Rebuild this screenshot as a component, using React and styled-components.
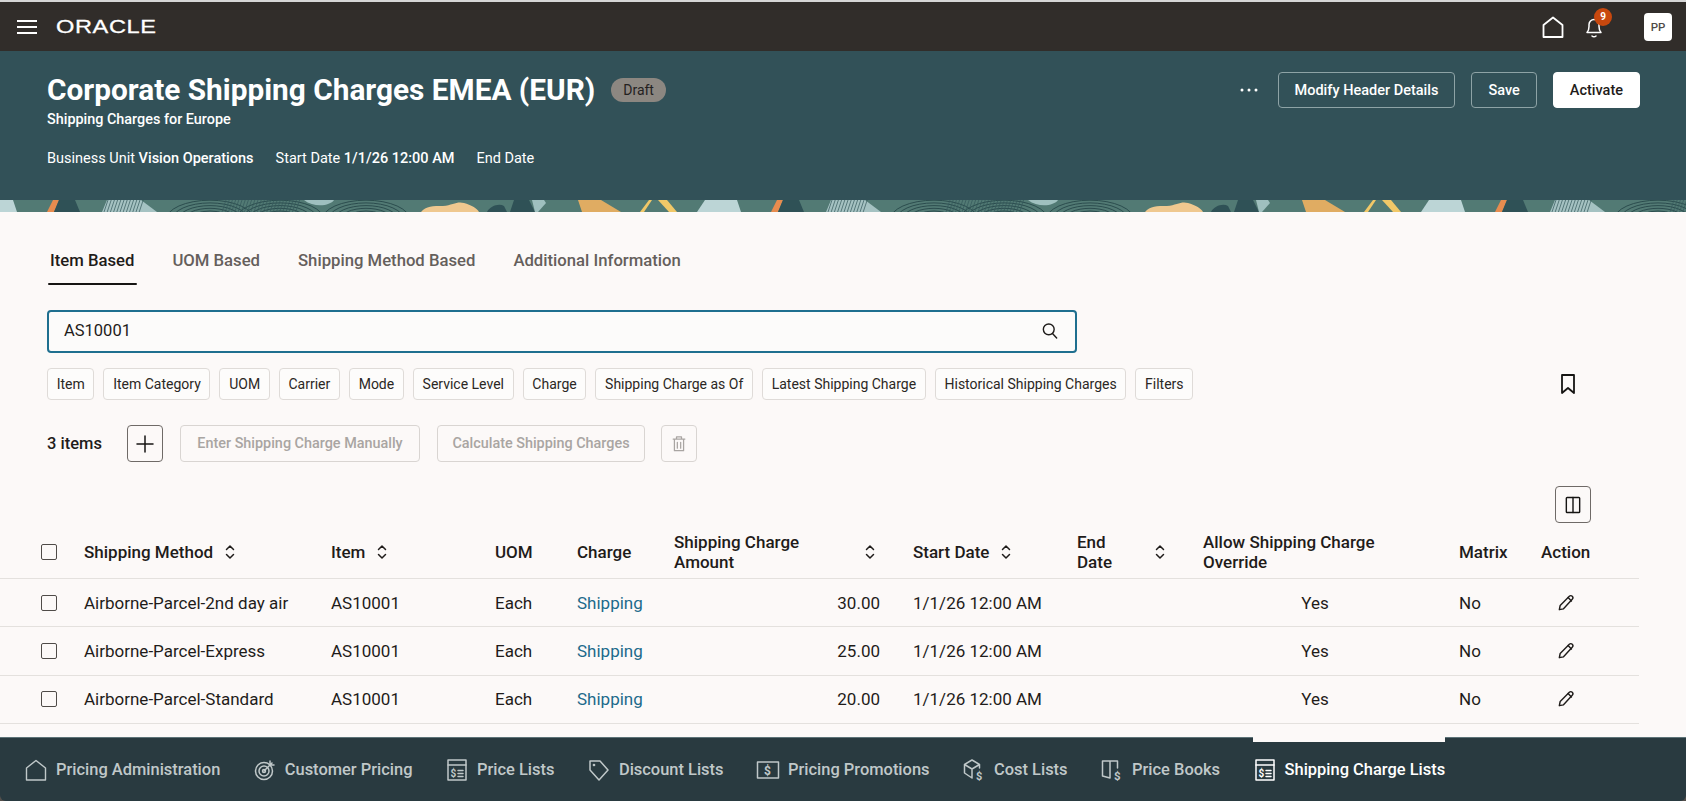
import React from "react";
import styled, { createGlobalStyle } from "styled-components";

const Global = createGlobalStyle`
  html, body { margin: 0; padding: 0; background: #fcf9f8; }
  body { font-family: Roboto, "Liberation Sans", sans-serif; color: #1f1c1a; overflow: hidden; }
  * { box-sizing: border-box; }
`;

const Page = styled.div`
  width: 1686px; height: 801px; display: flex; flex-direction: column;
  border-top: 2px solid #d6d6d6; background: #55504c; overflow: hidden;
`;
const TopBar = styled.header`
  height: 49px; flex: none; background: #312d2a; display: flex; align-items: center;
  padding: 0 14px 0 17px; color: #fff;
`;
const Logo = styled.span`
  margin-left: 19px; font: 400 19px "Liberation Sans", sans-serif; letter-spacing: 0.5px;
  transform: scaleX(1.24); transform-origin: left; -webkit-text-stroke: 0.3px #fff;
`;
const Spacer = styled.div`flex: 1;`;
const BellWrap = styled.div`position: relative; width: 24px; height: 24px; margin-left: 17px; margin-right: 38px;`;
const Badge = styled.span`
  position: absolute; right: -6px; top: -7px; width: 18px; height: 18px; border-radius: 50%;
  background: #c8480e; color: #fff; font: 700 10px/18px Roboto, sans-serif; text-align: center;
`;
const Avatar = styled.div`
  width: 28px; height: 28px; border-radius: 4px; background: #fff; color: #4f4b48;
  font: 500 11.5px/28px Roboto, sans-serif; text-align: center;
`;
const Hero = styled.section`
  height: 149px; flex: none; background: #325158; padding: 20px 46px 0 47px; color: #fff;
  display: flex; justify-content: space-between; align-items: flex-start;
`;
const TitleLine = styled.div`display: flex; align-items: center; gap: 16px;`;
const Title = styled.h1`margin: 0; font: 700 29.8px/38px Roboto, sans-serif;`;
const Pill = styled.span`
  background: #8c8781; color: #24211f; border-radius: 12px; font: 400 14px/24px Roboto, sans-serif; padding: 0 12px;
`;
const Sub = styled.div`font: 500 14.4px/18px Roboto, sans-serif; margin-top: 2px;`;
const Meta = styled.div`display: flex; gap: 22px; margin-top: 20px; font: 400 14.5px/20px Roboto, sans-serif;`;
const Strong = styled.b`font-weight: 500;`;
const HeroActions = styled.div`display: flex; align-items: center; height: 36px; gap: 16px; color: #fff; margin-top: 1px;`;
const HeroBtn = styled.button`
  height: 36px; border-radius: 4px; padding: 0 16px; font: 500 14.5px Roboto, sans-serif; cursor: pointer;
  background: ${p => (p.$solid ? "#fff" : "transparent")}; color: ${p => (p.$solid ? "#1f1c1a" : "#fff")};
  border: 1px solid ${p => (p.$solid ? "#fff" : "#8ea3a6")};
`;
const Dots = styled.svg`display: block; margin-right: 4px;`;
const Strip = styled.svg`display: block; width: 1686px; height: 12px; flex: none;`;
const Main = styled.main`flex: 1; min-height: 0; background: #fcf9f8;`;
const Tabs = styled.nav`display: flex; gap: 38px; padding: 39px 0 0 50px; height: 71px;`;
const TabItem = styled.a`
  position: relative; font: 500 16.7px/20px Roboto, sans-serif; color: ${p => (p.$on ? "#1f1c1a" : "#655f5c")};
  ${p => p.$on && `&::after{content:"";position:absolute;left:-2px;right:-3px;top:32px;height:2px;background:#161513;border-radius:2px;}`}
`;
const Search = styled.div`
  margin: 27px 0 0 47px; width: 1030px; height: 43px; border: 2px solid #1f6f8f; border-radius: 4px;
  display: flex; align-items: center; justify-content: space-between; padding: 0 15px 2px; font: 400 16.5px Roboto, sans-serif; background: #fcfbfa;
`;
const Chips = styled.div`display: flex; align-items: center; gap: 9px; margin: 15px 0 0 47px; height: 32px; width: 1533px;`;
const Chip = styled.span`
  height: 32px; padding: 0 8.7px 1px; display: flex; align-items: center; border: 1px solid #dfdbd8; border-radius: 4px;
  font: 400 14px Roboto, sans-serif; color: #2b2724; background: #fdfcfb; white-space: nowrap;
`;
const BookmarkBtn = styled.span`margin-left: auto; display: flex; color: #161513;`;
const ToolRow = styled.div`display: flex; align-items: center; margin: 25px 0 0 47px; height: 37px;`;
const Count = styled.span`font: 500 16.5px Roboto, sans-serif; width: 80px;`;
const IconBtn = styled.span`
  width: 36px; height: 37px; border-radius: 4px; display: flex; align-items: center; justify-content: center;
  border: 1px solid ${p => (p.$dim ? "#d9d5d2" : "#6f6a67")}; color: ${p => (p.$dim ? "#a9a5a2" : "#161513")};
  margin-left: ${p => p.$ml || 0}px;
`;
const GhostBtn = styled.span`
  height: 37px; width: ${p => p.$w}px; border: 1px solid #d9d5d2; border-radius: 4px; display: flex; align-items: center; justify-content: center;
  font: 500 14.4px Roboto, sans-serif; color: #a9a5a2; margin-left: ${p => p.$ml}px;
`;
const ColsRow = styled.div`display: flex; justify-content: flex-end; width: 1591px; margin-top: 24px;`;
const Table = styled.div`width: 1639px; margin-top: 4px;`;
const Row = styled.div`
  display: grid; grid-template-columns: 84px 247px 164px 82px 97px 239px 164px 126px 256px 82px 98px;
  align-items: center; height: ${p => (p.$head ? 52 : 48.3)}px; border-bottom: 1px solid #e4e1de;
  padding-bottom: ${p => (p.$head ? 2 : 0)}px;
  font: ${p => (p.$head ? 500 : 400)} 17px/20px Roboto, sans-serif;
`;
const Cell = styled.div`
  display: flex; align-items: center;
  justify-content: ${p => p.$j || "flex-start"};
  padding-right: ${p => p.$pr || 0}px; padding-left: ${p => p.$pl || 0}px;
  ${p => p.$link && `color:#1d6a8b;`}
  gap: ${p => p.$gap || 0}px;
`;
const Box = styled.span`width: 16px; height: 16px; border: 1.5px solid #4f4b48; border-radius: 2px; margin-left: 41px; display: block;`;
const Dock = styled.footer`
  flex: none; height: 64px; background: #293a40; display: flex; align-items: stretch; gap: 32.5px;
  padding-left: 24px; border-bottom-left-radius: 6px; border-bottom-right-radius: 6px; border-top: 1px solid #5d7378;
`;
const DockItem = styled.div`
  position: relative; display: flex; align-items: center; gap: 8px;
  color: ${p => (p.$on ? "#fff" : "#c0c8c9")}; font: 500 16.45px Roboto, sans-serif; white-space: nowrap;
  ${p => p.$on && `&::before{content:"";position:absolute;left:0;right:0;top:-1px;height:5px;background:#fcf9f8;}`}
`;

const S = ({ size = 24, children, sw = 1.5 }) => (
  <svg width={size} height={size} viewBox="0 0 24 24" fill="none" stroke="currentColor" strokeWidth={sw} strokeLinecap="round" strokeLinejoin="round">{children}</svg>
);
const Menu = () => <svg width="20" height="14" viewBox="0 0 20 14" stroke="#fff" strokeWidth="2"><path d="M0 1h20M0 7h20M0 13h20" /></svg>;
const Home = ({ size = 24, sw = 1.8 }) => <S size={size} sw={sw}><path d="M2.500 22V10L12 2.500 21.500 10v12z" /></S>;
const Bell = () => <S><path d="M5 17.500c1.400-1.600 2-3.200 2-6V9.500a5 5 0 0 1 10 0v2c0 2.800.6 4.400 2 6z" /><path d="M10 21c1 .9 3 .9 4 0" /></S>;
const Magnifier = () => <S size={20} sw={1.7}><circle cx="10.500" cy="10" r="6.500" /><path d="M15 15l5 5.500" /></S>;
const Bookmark = () => <S sw={1.8}><path d="M6 3h12v18l-6-5-6 5z" /></S>;
const Plus = () => <S sw={1.5}><path d="M12 4v16M4 12h16" /></S>;
const Trash = () => <S size={20}><path d="M5 6h14M9 6V3.500h6V6M6.500 6v14h11V6M10 10v7M14 10v7" /></S>;
const Columns = () => <S size={20} sw={1.7}><rect x="4" y="3" width="16" height="18" rx="1" /><path d="M12 3v18" /></S>;
const Sort = () => <svg width="12" height="16" viewBox="0 0 12 16" fill="none" stroke="currentColor" strokeWidth="1.500" strokeLinecap="round" strokeLinejoin="round"><path d="M2.500 5.500L6 2l3.500 3.500M2.500 10.500L6 14l3.500-3.500" /></svg>;
const Pencil = () => <S size={20} sw={1.7}><path d="M4 20l1-5L16 4c1-1 2.500-1 3.500 0s1 2.500 0 3.500L9 19z" /><path d="M14.500 5.500l4 4" /></S>;
const Target = () => <S><circle cx="11" cy="13" r="8.500" /><circle cx="11" cy="13" r="5" /><circle cx="11" cy="13" r="1.500" /><path d="M11 13l8-8M17 3v4h4" /></S>;
const Ledger = () => <S><rect x="3" y="2" width="18" height="20" /><path d="M3 7h18" /><text x="5.500" y="18.500" fontSize="10" fontWeight="700" fill="currentColor" stroke="none">$</text><path d="M13 12.500h5M13 15.500h5M13 18.500h5" /></S>;
const Tag = () => <S><path d="M3 3h10l8 9-9 10-9-10z" /><circle cx="7" cy="7" r=".6" /></S>;
const Promo = () => <S><rect x="1.500" y="4" width="21" height="16" /><text x="8" y="17" fontSize="12" fontWeight="700" fill="currentColor" stroke="none">$</text></S>;
const Cube = () => <S><path d="M10 2l7.500 4.500V10M10 2L2.500 6.500v8.500l7.500 5M2.500 6.500L10 11l7.500-4.500M10 11v9" /><text x="14" y="21.500" fontSize="11" fontWeight="700" fill="currentColor" stroke="none">$</text></S>;
const BookD = () => <S><path d="M2.500 3H10v17l-7.500-2zM10 3h7.500v7" /><text x="14" y="21.500" fontSize="11.500" fontWeight="700" fill="currentColor" stroke="none">$</text></S>;

const Rings = ({ cx }) => (
  <g fill="none" stroke="#27474a" strokeWidth=".9">
    {[8, 14, 20, 26, 32, 38, 44].map(r => <ellipse key={r} cx={cx} cy="20" rx={r} ry={r * 0.45} />)}
  </g>
);
const Hatch = ({ x, n }) => (
  <g stroke="#34585a" strokeWidth=".7">
    {Array.from({ length: n }, (_, i) => <path key={i} d={`M${x + i * 3.200 + 4} 0L${x + i * 3.200} 12`} />)}
  </g>
);
const Tile = ({ x }) => (
  <g transform={`translate(${x} 0)`}>
    <path d="M53 0h6l-5 12h-7z" fill="#e78c4f" />
    <path d="M59 0h16l5 12H54z" fill="#2f5156" />
    <path d="M107 0h34l16 12H102z" fill="#a5c2c2" />
    <Hatch x={104} n={12} />
    <Rings cx={210} />
    <Rings cx={280} />
    <Rings cx={366} />
    <Hatch x={222} n={24} />
    <path d="M304 0h30c-4 6-20 8-30 0z" fill="#9fc0bf" />
    <path d="M421 12c5-6 12-6 22-6 10-1 14-5 21-3 7 2 13 5 15 9z" fill="#efc88f" />
    <path d="M487 12c3-6 12-9 17-6l3 6z" fill="#2f5156" />
    <path d="M514 0h15l6 12h-25z" fill="#2f5156" />
    <path d="M532 0h12l2 3-8 9h-3z" fill="#9fc0bf" />
    <path d="M578 0h23l20 12h-39z" fill="#e0ac62" />
    <path d="M649 0h3l-8 12h-4z" fill="#f1c868" />
    <path d="M658 0h9l10 12h-8z" fill="#f1c868" />
    <path d="M705 0h32l4 12h-44z" fill="#bcd5d6" />
  </g>
);
const Pattern = () => (
  <Strip viewBox="0 0 1686 12" preserveAspectRatio="none">
    <rect width="1686" height="12" fill="#527a74" />
    {[-724, 0, 724, 1448].map(x => <Tile key={x} x={x} />)}
  </Strip>
);

const rows = [
  ["Airborne-Parcel-2nd day air", "30.00"],
  ["Airborne-Parcel-Express", "25.00"],
  ["Airborne-Parcel-Standard", "20.00"],
];
const chips = ["Item", "Item Category", "UOM", "Carrier", "Mode", "Service Level", "Charge", "Shipping Charge as Of", "Latest Shipping Charge", "Historical Shipping Charges", "Filters"];
const dock = [
  ["Pricing Administration", <Home key="h" sw={1.4} />],
  ["Customer Pricing", <Target key="t" />],
  ["Price Lists", <Ledger key="l" />],
  ["Discount Lists", <Tag key="g" />],
  ["Pricing Promotions", <Promo key="p" />],
  ["Cost Lists", <Cube key="c" />],
  ["Price Books", <BookD key="b" />],
  ["Shipping Charge Lists", <Ledger key="s" />, true],
];

export default function App() {
  return (
    <Page>
      <Global />
      <TopBar>
        <Menu />
        <Logo>ORACLE</Logo>
        <Spacer />
        <Home />
        <BellWrap><Bell /><Badge>9</Badge></BellWrap>
        <Avatar>PP</Avatar>
      </TopBar>
      <Hero>
        <div>
          <TitleLine><Title>Corporate Shipping Charges EMEA (EUR)</Title><Pill>Draft</Pill></TitleLine>
          <Sub>Shipping Charges for Europe</Sub>
          <Meta>
            <span>Business Unit <Strong>Vision Operations</Strong></span>
            <span>Start Date <Strong>1/1/26 12:00 AM</Strong></span>
            <span>End Date</span>
          </Meta>
        </div>
        <HeroActions>
          <Dots width="18" height="4" viewBox="0 0 18 4" fill="#fff"><circle cx="2" cy="2" r="1.500" /><circle cx="9" cy="2" r="1.500" /><circle cx="16" cy="2" r="1.500" /></Dots>
          <HeroBtn>Modify Header Details</HeroBtn>
          <HeroBtn>Save</HeroBtn>
          <HeroBtn $solid>Activate</HeroBtn>
        </HeroActions>
      </Hero>
      <Pattern />
      <Main>
        <Tabs>
          <TabItem $on>Item Based</TabItem>
          <TabItem>UOM Based</TabItem>
          <TabItem>Shipping Method Based</TabItem>
          <TabItem>Additional Information</TabItem>
        </Tabs>
        <Search>AS10001<Magnifier /></Search>
        <Chips>
          {chips.map(c => <Chip key={c}>{c}</Chip>)}
          <BookmarkBtn><Bookmark /></BookmarkBtn>
        </Chips>
        <ToolRow>
          <Count>3 items</Count>
          <IconBtn><Plus /></IconBtn>
          <GhostBtn $w={240} $ml={17}>Enter Shipping Charge Manually</GhostBtn>
          <GhostBtn $w={208} $ml={17}>Calculate Shipping Charges</GhostBtn>
          <IconBtn $dim $ml={16}><Trash /></IconBtn>
        </ToolRow>
        <ColsRow><IconBtn><Columns /></IconBtn></ColsRow>
        <Table>
          <Row $head>
            <Cell><Box /></Cell>
            <Cell $gap={11}>Shipping Method <Sort /></Cell>
            <Cell $gap={11}>Item <Sort /></Cell>
            <Cell>UOM</Cell>
            <Cell>Charge</Cell>
            <Cell $j="space-between" $pr={37}><span>Shipping Charge<br />Amount</span><Sort /></Cell>
            <Cell $gap={11}>Start Date <Sort /></Cell>
            <Cell $j="space-between" $pr={37}><span>End<br />Date</span><Sort /></Cell>
            <Cell><span>Allow Shipping Charge<br />Override</span></Cell>
            <Cell>Matrix</Cell>
            <Cell>Action</Cell>
          </Row>
          {rows.map(([m, a]) => (
            <Row key={m}>
              <Cell><Box /></Cell>
              <Cell>{m}</Cell>
              <Cell>AS10001</Cell>
              <Cell>Each</Cell>
              <Cell $link>Shipping</Cell>
              <Cell $j="flex-end" $pr={33}>{a}</Cell>
              <Cell>1/1/26 12:00 AM</Cell>
              <Cell />
              <Cell $j="center" $pr={32}>Yes</Cell>
              <Cell>No</Cell>
              <Cell $pl={15}><Pencil /></Cell>
            </Row>
          ))}
        </Table>
      </Main>
      <Dock>
        {dock.map(([t, ic, on]) => <DockItem key={t} $on={on}>{ic}{t}</DockItem>)}
      </Dock>
    </Page>
  );
}
